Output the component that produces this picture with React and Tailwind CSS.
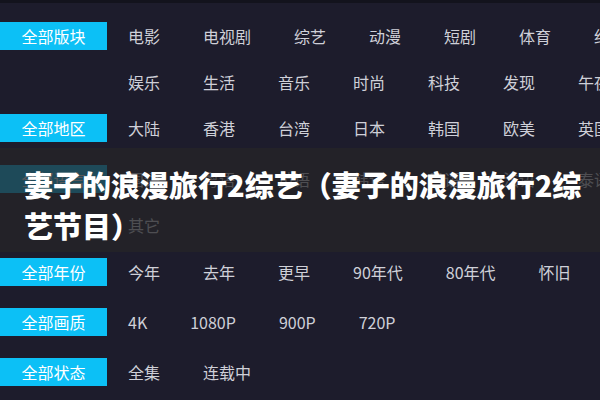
import React from "react";

const groups = [
  { label: "全部版块", mb: "mb-0", items: ["电影", "电视剧", "综艺", "动漫", "短剧", "体育", "纪录片", "娱乐", "生活", "音乐", "时尚", "科技", "发现", "午夜"] },
  { label: "全部地区", mb: "mb-[5px]", items: ["大陆", "香港", "台湾", "日本", "韩国", "欧美", "英国"] },
  { label: "全部语言", mb: "mb-[1px]", items: ["国语", "粤语", "英语", "韩语", "日语", "法语", "泰语", "其它"] },
  { label: "全部年份", mb: "mb-[4px]", items: ["今年", "去年", "更早", "90年代", "80年代", "怀旧"] },
  { label: "全部画质", mb: "mb-[4px]", items: ["4K", "1080P", "900P", "720P"] },
  { label: "全部状态", mb: "mb-0", items: ["全集", "连载中"] },
];

const FilterRow = ({ label, items, mb }) => (
  <div className={`flex items-start ${mb}`}>
    <div className="h-[46px] flex items-center shrink-0">
      <span className="w-[107px] h-[28px] bg-[#0cc0f6] text-white text-[16px] flex items-center justify-center">
        {label}
      </span>
    </div>
    <ul className="ml-[21px] w-[580px] flex flex-wrap">
      {items.map((item) => (
        <li key={item} className="h-[46px] leading-[46px] mr-[43px] text-[16px] text-[#cfd0d8] whitespace-nowrap">
          {item}
        </li>
      ))}
    </ul>
  </div>
);

export default function App() {
  return (
    <div
      className="relative w-[600px] h-[400px] overflow-hidden bg-[#1d1c2c]"
      style={{ fontFamily: '"Noto Sans CJK SC", "Noto Sans", sans-serif' }}
    >
      <div className="h-[3px] bg-[#13131d]" />
      <div className="pt-[10px] w-[720px]">
        {groups.map((g) => (
          <FilterRow key={g.label} {...g} />
        ))}
      </div>

      {/* title overlay */}
      <div className="absolute left-0 right-0 top-[148px] h-[104px] bg-[#252528]/[0.76] pl-[24px] pt-[16px]">
        <h1 className="w-[566px] text-white text-[29px] leading-[41px] font-black">
          妻子的浪漫旅行2综艺（妻子的浪漫旅行2综艺节目）
        </h1>
      </div>
    </div>
  );
}
